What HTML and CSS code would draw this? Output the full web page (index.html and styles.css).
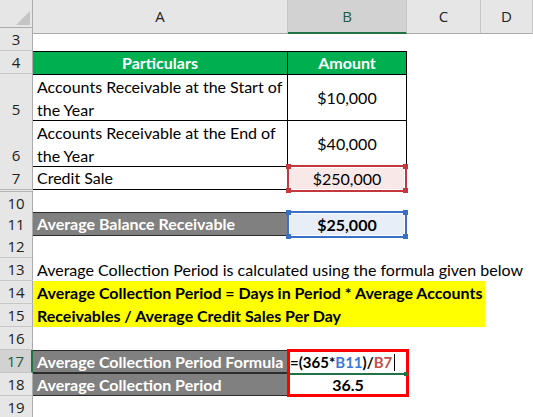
FILE: index.html
```html
<!DOCTYPE html>
<html>
<head>
<meta charset="utf-8">
<link rel="stylesheet" href="styles.css">
</head>
<body>
<div class="sheet">
  <div class="row hdr">
    <div class="corner"><svg width="33" height="28" viewBox="0 0 33 28"><polygon points="16,25 30,25 30,11" fill="#c4c4c4"/></svg></div>
    <div class="ch">A</div>
    <div class="ch ch-sel">B</div>
    <div class="ch">C</div>
    <div class="ch">D</div>
  </div>

  <div class="row h23">
    <div class="rh">3</div><div class="c"></div><div class="c"></div><div class="c"></div><div class="c"></div>
  </div>

  <div class="row h23">
    <div class="rh">4</div>
    <div class="c tb green center bold">Particulars</div>
    <div class="c tb green center bold">Amount</div>
    <div class="c"></div><div class="c"></div>
  </div>

  <div class="row h46">
    <div class="rh">5</div>
    <div class="c tb wrap">Accounts Receivable at the Start of the Year</div>
    <div class="c tb center">$10,000</div>
    <div class="c"></div><div class="c"></div>
  </div>

  <div class="row h46">
    <div class="rh">6</div>
    <div class="c tb wrap">Accounts Receivable at the End of the Year</div>
    <div class="c tb center">$40,000</div>
    <div class="c"></div><div class="c"></div>
  </div>

  <div class="row h23">
    <div class="rh">7</div>
    <div class="c tb tbb">Credit Sale</div>
    <div class="c pos">
      <div class="selbox selred center">$250,000<i class="k tl"></i><i class="k tr"></i><i class="k bl"></i><i class="k br"></i></div>
    </div>
    <div class="c"></div><div class="c"></div>
  </div>

  <div class="row h23">
    <div class="rh rh-hidden">10</div><div class="c"></div><div class="c"></div><div class="c"></div><div class="c"></div>
  </div>

  <div class="row h23">
    <div class="rh">11</div>
    <div class="c gray bold">Average Balance Receivable</div>
    <div class="c pos">
      <div class="selbox selblue center bold">$25,000<i class="k tl"></i><i class="k tr"></i><i class="k bl"></i><i class="k br"></i></div>
    </div>
    <div class="c"></div><div class="c"></div>
  </div>

  <div class="row h23">
    <div class="rh">12</div><div class="c"></div><div class="c"></div><div class="c"></div><div class="c"></div>
  </div>

  <div class="row h23">
    <div class="rh">13</div>
    <div class="c over">Average Collection Period is calculated using the formula given below</div>
    <div class="c"></div><div class="c"></div><div class="c"></div>
  </div>

  <div class="row two">
    <div class="rh">14</div>
    <div class="yellow bold">Average Collection Period = Days in Period * Average Accounts<br>Receivables / Average Credit Sales Per Day</div>
    <div class="rh">15</div>
  </div>

  <div class="row h23">
    <div class="rh">16</div><div class="c"></div><div class="c"></div><div class="c"></div><div class="c"></div>
  </div>

  <div class="row two">
    <div class="rh rh-sel">17</div>
    <div class="c gray bold dk">Average Collection Period Formula</div>
    <div class="redbox">
      <div class="formula bold">=(365*<span class="ref-b">B11</span>)/<span class="ref-r">B7</span><span class="caret"></span></div>
      <div class="editline"></div>
      <div class="result bold">36.5</div>
    </div>
    <div class="rh">18</div>
    <div class="c gray bold dk dkb">Average Collection Period</div>
  </div>

  <div class="row h23">
    <div class="rh">19</div><div class="c"></div><div class="c"></div><div class="c"></div><div class="c"></div>
  </div>
</div>
</body>
</html>
```

FILE: styles.css
```css
html, body {
  margin: 0;
  padding: 0;
  background: #ffffff;
}
body {
  font-family: Lato, "Liberation Sans", sans-serif;
  font-size: 16px;
  color: #000;
  overflow: hidden;
}
.sheet {
  width: 533px;
  height: 417px;
  overflow: hidden;
}
.row {
  display: grid;
  grid-template-columns: 33px 255px 119px 74px 52px;
}
.hdr { height: 28px; }
.h23 { height: 23px; }
.h46 { height: 46px; }
.two {
  grid-template-rows: 23px 23px;
}

.corner {
  background: #e6e6e6;
  border-right: 1px solid #ababab;
  border-bottom: 1px solid #ababab;
  box-sizing: border-box;
  height: 28px;
}
.corner svg { display: block; }
.ch {
  background: #e6e6e6;
  border-right: 1px solid #c6c6c6;
  border-bottom: 1px solid #ababab;
  box-sizing: border-box;
  text-align: center;
  color: #222;
  font-family: "Open Sans", "Liberation Sans", sans-serif;
  font-size: 15px;
  line-height: 32px;
}
.ch-sel {
  background: #d2d2d2;
  border-bottom: 2px solid #217346;
  color: #1f5c44;
}

.rh {
  background: #e6e6e6;
  border-right: 1px solid #ababab;
  border-bottom: 1px solid #c6c6c6;
  box-sizing: border-box;
  color: #222;
  font-family: "Open Sans", "Liberation Sans", sans-serif;
  font-size: 15px;
  text-align: center;
  display: flex;
  align-items: flex-end;
  justify-content: center;
  line-height: 22px;
  grid-column: 1;
}
.rh-hidden {
  border-top: 3px double #b5b5b5;
}
.rh-sel {
  background: #d2d2d2;
  border-right: 2px solid #217346;
  color: #1f5c44;
}

.c {
  box-sizing: border-box;
  padding: 0 4px;
  display: flex;
  align-items: center;
  line-height: 22px;
  white-space: nowrap;
  min-width: 0;
}
.center { justify-content: center; text-align: center; }
.bold { font-weight: 700; }
.tb {
  border-top: 1px solid #000;
  border-right: 1px solid #000;
}
.tbb { border-bottom: 1px solid #000; }
.wrap {
  white-space: normal;
  line-height: 23px;
  align-items: flex-end;
  padding-right: 0;
}
.green {
  background: #00b050;
  color: #fff;
}
.gray {
  background: #808080;
  color: #fff;
  border-top: 1px solid #2b2b2b;
  border-bottom: 1px solid #2b2b2b;
}
.dk { grid-column: 2; }
.dkb { border-top: 1px solid #2b2b2b; }
.over { overflow: visible; }

.pos { position: relative; padding: 0; }
.selbox {
  position: absolute;
  inset: -1px 0 -2px -1px;
  box-sizing: border-box;
  display: flex;
  align-items: center;
  justify-content: center;
  line-height: 20px;
}
.selred {
  border: 2px solid #c4383d;
  box-shadow: inset 0 0 0 1px #fff;
  background: #f9e8e8;
}
.selblue {
  border: 2px solid #3a6fc8;
  box-shadow: inset 0 0 0 1px #fff;
  background: #e8eef8;
}
.k {
  position: absolute;
  width: 5px;
  height: 5px;
  border: 0;
}
.selred .k { background: #c4383d; }
.selblue .k { background: #3a6fc8; }
.k.tl { left: -3px; top: -3px; }
.k.tr { right: -3px; top: -3px; }
.k.bl { left: -3px; bottom: -3px; }
.k.br { right: -3px; bottom: -3px; }

.yellow {
  grid-column: 2 / span 4;
  grid-row: 1 / span 2;
  width: 452px;
  background: #ffff00;
  padding: 0 4px;
  box-sizing: border-box;
  line-height: 23px;
  white-space: nowrap;
}

.redbox {
  grid-column: 3;
  grid-row: 1 / span 2;
  margin: -1px -2px -1px -1px;
  border: 3px solid #ff0000;
  box-sizing: border-box;
  display: flex;
  flex-direction: column;
  position: relative;
  z-index: 1;
  background: #fff;
}
.formula {
  height: 21px;
  line-height: 21px;
  font-size: 15px;
  display: flex;
  align-items: center;
  white-space: nowrap;
}
.ref-b { color: #3c78d8; }
.ref-r { color: #c0504d; }
.caret {
  display: inline-block;
  width: 1px;
  height: 17px;
  background: #000;
  margin-left: 2px;
}
.editline {
  height: 2px;
  background: #217346;
  margin-right: -1px;
  position: relative;
}
.editline::after {
  content: "";
  position: absolute;
  right: -1px;
  top: -1px;
  width: 4px;
  height: 4px;
  background: #217346;
}
.result {
  flex: 1;
  display: flex;
  align-items: center;
  justify-content: center;
}
```
